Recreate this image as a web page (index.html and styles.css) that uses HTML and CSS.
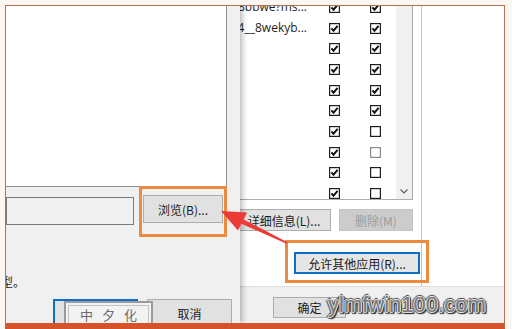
FILE: index.html
```html
<!DOCTYPE html>
<html lang="zh-CN">
<head>
  <meta charset="UTF-8">
  <meta name="viewport" content="width=device-width, initial-scale=1.0">
  <title>允许的应用</title>
  <link rel="stylesheet" href="styles.css">
</head>
<body>
  <svg class="defs" aria-hidden="true">
    <symbol id="cb-on" viewBox="0 0 11 11">
      <rect x="0.6" y="0.6" width="9.8" height="9.8" fill="#fff" stroke="#1e1e1e" stroke-width="1.2"/>
      <path d="M2.4 5.4 L4.5 7.7 L8.6 2.9" fill="none" stroke="#111" stroke-width="1.9"/>
    </symbol>
    <symbol id="cb-off" viewBox="0 0 11 11">
      <rect x="0.6" y="0.6" width="9.8" height="9.8" fill="#fff" stroke="#1e1e1e" stroke-width="1.2"/>
    </symbol>
    <symbol id="cb-dim" viewBox="0 0 11 11">
      <rect x="0.6" y="0.6" width="9.8" height="9.8" fill="#fff" stroke="#8c8c8c" stroke-width="1.2"/>
    </symbol>
  </svg>

  <div class="frame">
    <!-- firewall window behind -->
    <div class="back-window">
      <div class="main">
        <div class="apps-pane">
          <div class="app-list">
            <div class="rows">
              <div class="row"><span class="name name-end">Microsoft.Windows.Photos_8wekyb3d8bbwe?ms...</span><svg class="cb"><use href="#cb-on"/></svg><svg class="cb"><use href="#cb-on"/></svg></div>
              <div class="row"><span class="name name-end">Microsoft.WindowsStore_x64__8wekyb...</span><svg class="cb"><use href="#cb-on"/></svg><svg class="cb"><use href="#cb-on"/></svg></div>
              <div class="row"><span class="name">Cortana</span><svg class="cb"><use href="#cb-on"/></svg><svg class="cb"><use href="#cb-on"/></svg></div>
              <div class="row"><span class="name">HomeGroup</span><svg class="cb"><use href="#cb-on"/></svg><svg class="cb"><use href="#cb-on"/></svg></div>
              <div class="row"><span class="name">Microsoft Edge</span><svg class="cb"><use href="#cb-on"/></svg><svg class="cb"><use href="#cb-on"/></svg></div>
              <div class="row"><span class="name">Microsoft 照片</span><svg class="cb"><use href="#cb-on"/></svg><svg class="cb"><use href="#cb-on"/></svg></div>
              <div class="row"><span class="name">Skype</span><svg class="cb"><use href="#cb-on"/></svg><svg class="cb"><use href="#cb-off"/></svg></div>
              <div class="row"><span class="name">Windows 应用商店</span><svg class="cb"><use href="#cb-on"/></svg><svg class="cb"><use href="#cb-dim"/></svg></div>
              <div class="row"><span class="name">Xbox</span><svg class="cb"><use href="#cb-on"/></svg><svg class="cb"><use href="#cb-off"/></svg></div>
              <div class="row"><span class="name">天气</span><svg class="cb"><use href="#cb-on"/></svg><svg class="cb"><use href="#cb-off"/></svg></div>
            </div>
            <div class="scrollbar">
              <svg class="chevron" viewBox="0 0 8 5"><path d="M0.5 0.5 L4 4 L7.5 0.5" fill="none" stroke="#606060" stroke-width="1.2"/></svg>
            </div>
          </div>
          <div class="btn-row">
            <button class="btn btn-details">详细信息(L)...</button>
            <button class="btn btn-remove" disabled>删除(M)</button>
          </div>
          <div class="allow-row">
            <button class="btn btn-allow">允许其他应用(R)...</button>
          </div>
        </div>
        <div class="side-pane"></div>
      </div>
      <div class="bottom-bar">
        <button class="btn btn-ok">确定</button>
      </div>
    </div>

    <!-- add app dialog in front -->
    <div class="dialog">
      <div class="file-list"></div>
      <div class="path-row">
        <div class="path-box"></div>
        <button class="btn btn-browse">浏览(B)...</button>
      </div>
      <div class="dlg-note">型。</div>
      <div class="dlg-buttons">
        <button class="btn btn-default" aria-label="添加"></button>
        <button class="btn">取消</button>
      </div>
    </div>

    <!-- annotations -->
    <div class="stamp"><span>中</span><span>夕</span><span>化</span></div>
    <div class="callout callout-browse"></div>
    <div class="callout callout-allow"></div>
    <svg class="arrow" viewBox="0 0 512 329">
      <polygon points="221,211 247,212.5 243.6,219.4 287.4,242.3 286.6,243.7 241.4,223.8 238,230.6" fill="#ec3a36"/>
    </svg>
    <div class="watermark">ylmfwin100.com</div>
  </div>
</body>
</html>
```

FILE: styles.css
```css
* {
  box-sizing: border-box;
}
body {
  margin: 0;
  background: #fcf7f3;
  font-family: "Noto Sans CJK SC", "Noto Sans", sans-serif;
  font-size: 12px;
  color: #1b1b1b;
}
.defs {
  display: block;
  width: 0;
  height: 0;
  overflow: hidden;
}
.frame {
  position: relative;
  width: 500px;
  height: 324px;
  margin: 5px 0 0 5px;
  border: 1px solid #b3734f;
  border-bottom: 6px solid #d4532b;
  overflow: hidden;
  background: #fff;
}

/* back window */
.back-window {
  display: flex;
  flex-direction: column;
  height: 100%;
}
.main {
  display: flex;
  height: 280px;
}
.apps-pane {
  width: 416px;
  border-right: 1px solid #c4c4c4;
  background: #fff;
}
.side-pane {
  flex: 1;
  background: #fff;
}
.app-list {
  display: flex;
  width: 407px;
  height: 194px;
  border-right: 1px solid #abadb3;
  border-bottom: 1px solid #abadb3;
  overflow: hidden;
}
.rows {
  flex: 1;
  margin-top: -9px;
}
.row {
  display: flex;
  align-items: center;
  height: 20.7px;
}
.name {
  width: 323px;
  padding: 0 22px 0 4px;
  white-space: nowrap;
  overflow: hidden;
  font-family: "Open Sans", "Noto Sans CJK SC", sans-serif;
  line-height: 16px;
  color: #1e1e1e;
}
.name-end {
  text-align: right;
}
.cb {
  display: block;
  width: 11px;
  height: 11px;
}
.cb + .cb {
  margin-left: 30px;
}
.scrollbar {
  width: 16px;
  background: #f0f0f0;
  display: flex;
  flex-direction: column;
  justify-content: flex-end;
  align-items: center;
  padding-bottom: 5px;
}
.chevron {
  width: 8px;
  height: 5px;
}
.btn {
  font: inherit;
  font-size: 12px;
  color: #1b1b1b;
  background: #e1e1e1;
  border: 1px solid #adadad;
  padding: 0;
  height: 22px;
  white-space: nowrap;
}
.btn-row {
  display: flex;
  justify-content: flex-end;
  gap: 8px;
  margin-top: 9px;
  padding-right: 8px;
}
.btn-details {
  width: 94px;
}
.btn-remove {
  width: 74px;
  background: #cccccc;
  border-color: #c4c4c4;
  color: #9c9c9c;
}
.allow-row {
  display: flex;
  justify-content: flex-end;
  margin-top: 21px;
  padding-right: 1px;
}
.btn-allow {
  width: 126px;
  border: 2px solid #0b6fc6;
  background: #e5e5e5;
}
.bottom-bar {
  flex: 1;
  border-top: 1px solid #dedede;
  background: #f0f0f0;
  padding: 10px 0 0 267px;
}
.btn-ok {
  width: 73px;
  height: 21px;
}

/* front dialog */
.dialog {
  position: absolute;
  left: 0;
  top: 0;
  bottom: 0;
  width: 234px;
  background: #f0f0f0;
  box-shadow: 2px 0 6px rgba(0, 0, 0, 0.3);
}
.file-list {
  width: 221px;
  height: 181px;
  background: #fff;
  border-right: 1px solid #8e8f8f;
  border-bottom: 1px solid #8e8f8f;
}
.path-row {
  display: flex;
  align-items: flex-start;
  margin-top: 8px;
}
.path-box {
  width: 128px;
  height: 28px;
  margin-top: 2px;
  border: 1px solid #7a7a7a;
  background: #f0f0f0;
}
.btn-browse {
  width: 80px;
  height: 28px;
  margin-left: 9px;
}
.dlg-note {
  margin: 49px 0 0 -5px;
  line-height: 16px;
}
.dlg-buttons {
  display: flex;
  gap: 9px;
  margin: 9px 0 0 47px;
}
.dlg-buttons .btn {
  width: 85px;
  height: 28px;
}
.dlg-buttons .btn-default {
  border: 2px solid #0b6fc6;
}

/* overlays */
.stamp {
  position: absolute;
  left: 58px;
  top: 295px;
  width: 89px;
  height: 32px;
  display: flex;
  gap: 9px;
  padding: 3px 0 0 14px;
  border: 2px solid #9a9a9a;
  outline: 1px solid #c2c2c2;
  outline-offset: -5px;
  background: #f2f2f2;
  color: #6a6a6a;
  font-size: 13px;
  line-height: 18px;
}
.callout {
  position: absolute;
  border: 3px solid #ec8b40;
}
.callout-browse {
  left: 133px;
  top: 180px;
  width: 88px;
  height: 51px;
}
.callout-allow {
  left: 279px;
  top: 234px;
  width: 144px;
  height: 43px;
}
.arrow {
  position: absolute;
  left: -6px;
  top: -6px;
  width: 512px;
  height: 329px;
}
.watermark {
  position: absolute;
  left: 322px;
  top: 288px;
  font-family: "Liberation Sans", Arial, sans-serif;
  font-size: 22px;
  line-height: 22px;
  color: #7c7c7c;
  -webkit-text-stroke: 0.4px #7c7c7c;
  text-shadow: 1px 0 0 #fff, -1px 0 0 #fff, 0 1px 0 #fff, 0 -1px 0 #fff,
    2px 0 1px #333, -2px 0 1px #333, 0 2px 1px #333, 0 -2px 1px #333,
    2px 2px 1px #333;
}
```
